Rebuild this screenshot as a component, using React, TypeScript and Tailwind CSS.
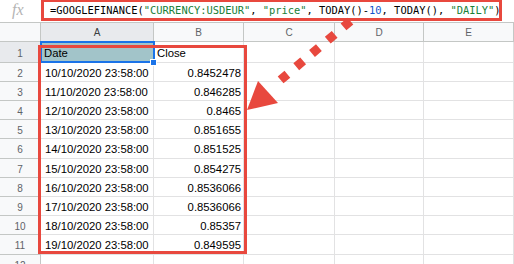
import React from 'react';

const RED = '#e8483e';

// row heights include the 1px bottom gridline
const dataRows: { h: string; date: string; close: string }[] = [
  { h: 'h-[19px]', date: '10/10/2020 23:58:00', close: '0.8452478' },
  { h: 'h-[19px]', date: '11/10/2020 23:58:00', close: '0.846285' },
  { h: 'h-[19px]', date: '12/10/2020 23:58:00', close: '0.8465' },
  { h: 'h-[19px]', date: '13/10/2020 23:58:00', close: '0.851655' },
  { h: 'h-[20px]', date: '14/10/2020 23:58:00', close: '0.851525' },
  { h: 'h-[19px]', date: '15/10/2020 23:58:00', close: '0.854275' },
  { h: 'h-[19px]', date: '16/10/2020 23:58:00', close: '0.8536066' },
  { h: 'h-[19px]', date: '17/10/2020 23:58:00', close: '0.8536066' },
  { h: 'h-[19px]', date: '18/10/2020 23:58:00', close: '0.85357' },
  { h: 'h-[20px]', date: '19/10/2020 23:58:00', close: '0.849595' },
];

const RowNum: React.FC<{ n: number; active?: boolean }> = ({ n, active }) => (
  <div
    className={`w-[41px] shrink-0 flex items-center justify-center pt-[2px] border-r border-b border-[#c4c7c5] text-[10px] text-[#5f6368] ${
      active ? 'bg-[#e8eaed]' : 'bg-[#f8f9fa]'
    }`}
  >
    {n}
  </div>
);

const EmptyCells: React.FC = () => (
  <>
    <div className="w-[91px] shrink-0 border-r border-b border-[#e2e2e3]" />
    <div className="w-[89px] shrink-0 border-r border-b border-[#e2e2e3]" />
    <div className="w-[90px] shrink-0 border-r border-b border-[#e2e2e3]" />
  </>
);

const Formula: React.FC = () => (
  <span className="font-['DejaVu_Sans_Mono',monospace] text-[10.4px] text-black whitespace-pre leading-none">
    =GOOGLEFINANCE(
    <span className="text-[#188038]">"CURRENCY:USDEUR"</span>,{' '}
    <span className="text-[#188038]">"price"</span>, TODAY()-
    <span className="text-[#1155cc]">10</span>, TODAY(),{' '}
    <span className="text-[#188038]">"DAILY"</span>)
  </span>
);

export default function App() {
  return (
    <div className="relative w-[514px] h-[264px] overflow-hidden bg-white font-['Liberation_Sans',Arial,sans-serif]">
      {/* formula bar */}
      <div className="flex h-[23px] border-b border-[#c4c7c5] bg-white">
        <div className="w-[41px] shrink-0 flex items-center pl-[12px] pb-[3px] font-['Liberation_Serif',serif] italic text-[16px] text-[#b4b4b4]">
          fx
        </div>
        <div className="flex items-center pl-[9px] pb-[2px]">
          <Formula />
        </div>
      </div>

      {/* column headers */}
      <div className="flex h-[19px] bg-[#f8f9fa] text-[10px] text-[#5f6368]">
        <div className="w-[41px] shrink-0 border-r border-b border-[#c4c7c5]" />
        <div className="w-[113px] shrink-0 flex items-center justify-center border-r border-b border-[#c4c7c5] bg-[#e8eaed] text-[#3c4043]">A</div>
        <div className="w-[90px] shrink-0 flex items-center justify-center border-r border-b border-[#c4c7c5]">B</div>
        <div className="w-[91px] shrink-0 flex items-center justify-center border-r border-b border-[#c4c7c5]">C</div>
        <div className="w-[89px] shrink-0 flex items-center justify-center border-r border-b border-[#c4c7c5]">D</div>
        <div className="w-[90px] shrink-0 flex items-center justify-center border-r border-b border-[#c4c7c5]">E</div>
      </div>

      {/* row 1 */}
      <div className="flex h-[21px] text-[11.3px] text-black">
        <RowNum n={1} active />
        <div className="w-[113px] shrink-0 flex items-center pt-[2px] pl-[3px] border-r border-b border-[#e2e2e3] bg-[#a2c4c9]">Date</div>
        <div className="w-[90px] shrink-0 flex items-center pt-[2px] pl-[3px] border-r border-b border-[#e2e2e3]">Close</div>
        <EmptyCells />
      </div>

      {/* data rows */}
      {dataRows.map((r, i) => (
        <div key={r.date} className={`flex ${r.h} text-[11.3px] text-black`}>
          <RowNum n={i + 2} />
          <div className="w-[113px] shrink-0 flex items-center pt-[2px] pl-[4px] border-r border-b border-[#e2e2e3] whitespace-nowrap">
            {r.date}
          </div>
          <div className="w-[90px] shrink-0 flex items-center justify-end pt-[2px] pr-[2px] border-r border-b border-[#e2e2e3]">
            {r.close}
          </div>
          <EmptyCells />
        </div>
      ))}

      {/* row 12, cut off */}
      <div className="flex h-[20px] text-[11.3px]">
        <RowNum n={12} />
        <div className="w-[113px] shrink-0 border-r border-b border-[#e2e2e3]" />
        <div className="w-[90px] shrink-0 border-r border-b border-[#e2e2e3]" />
        <EmptyCells />
      </div>

      {/* selection on A1 */}
      <div className="absolute left-[40px] top-[41px] w-[115px] h-[22px] border-2 border-[#1a73e8]" />
      <div className="absolute left-[150px] top-[59px] w-[7px] h-[7px] bg-[#1a73e8] border border-white" />

      {/* red annotation boxes */}
      <div className="absolute left-[41px] top-[-1px] w-[461px] h-[22px] border-[3px] border-[#e8483e]" />
      <div className="absolute left-[38px] top-[45px] w-[209px] h-[209px] border-[3px] border-[#e8483e]" />

      {/* dotted arrow */}
      <svg className="absolute left-0 top-0" width="514" height="264" viewBox="0 0 514 264">
        <line
          x1="350.4"
          y1="21.1"
          x2="280.6"
          y2="79.9"
          stroke={RED}
          strokeWidth="9"
          strokeDasharray="9 11.6"
        />
        <polygon points="247,110 258,81 278,103" fill={RED} />
      </svg>
    </div>
  );
}
